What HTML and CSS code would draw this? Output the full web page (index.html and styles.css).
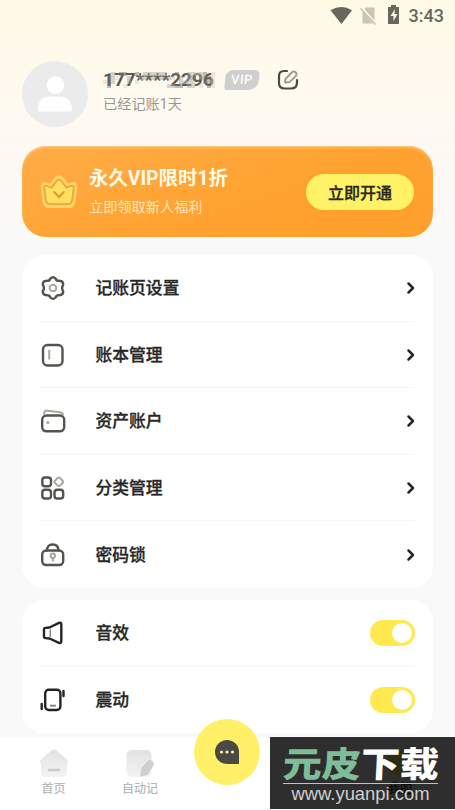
FILE: index.html
```html
<!DOCTYPE html>
<html lang="zh-CN">
<head>
<meta charset="utf-8">
<title>我的</title>
<link rel="stylesheet" href="styles.css">
</head>
<body>
<div class="screen">
  <header class="status">
    <svg class="status-icons" width="72" height="22" viewBox="0 0 72 22">
      <path d="M.5 4.8Q11.500-2 22 4.800L11.500 18.500Z" fill="#68665d" transform="translate(0 .500)"/>
      <path d="M36 2.500h8.500v16h-12v-12z" fill="#c8c5b5"/>
      <path d="M31 2.500l15 17" stroke="#fff9e6" stroke-width="3"/>
      <path d="M30.500 3.500l15 16" stroke="#c0bdae" stroke-width="1.400"/>
      <path d="M58 2h3V0h5v2h3v17H58z" fill="#68665d"/>
      <path d="M65 4l-4.500 7h3v5l4-7h-3z" fill="#fff9e6"/>
    </svg>
    <span class="clock">3:43</span>
  </header>

  <section class="profile">
    <svg class="avatar" width="66" height="66" viewBox="0 0 66 66"><circle cx="33" cy="33" r="33" fill="#ebebeb"/><circle cx="33.500" cy="24" r="8.800" fill="#fff"/><path d="M16 49Q16 35.500 29 35.500h8Q50 35.500 50 49q0 1.500-1.500 1.500h-31Q16 50.500 16 49z" fill="#fff"/></svg>
    <div class="who">
      <div class="name-line">
        <span class="phone"><span class="digits">177****2296</span>
          <svg class="mosaic" viewBox="0 0 28 4" preserveAspectRatio="none" shape-rendering="crispEdges">
            <path fill="#d5d1c4" d="M0 2h1v1H0zM3 1h1v1H3zM5 3h1v1H5zM8 2h1v1H8zM17 1h1v1h-1zM20 2h1v1h-1zM23 0h1v1h-1zM24 3h1v1h-1zM27 0h1v4h-1z"/>
            <path fill="#a5a299" d="M2 0h1v3H2zM6 1h1v2H6zM10 0h6v1h-6zM9 1h8v1H9zM16 3h2v1h-2zM19 1h1v2h-1zM21 0h2v4h-2zM24 0h1v2h-1z"/>
            <path fill="#77756d" d="M1 1h1v3H1zM4 0h2v1H4zM8 0h1v1H8zM11 1h1v1h-1zM13 1h1v1h-1zM15 1h1v1h-1zM18 0h1v1h-1zM18 3h2v1h-2zM22 1h1v1h-1zM25 0h1v3h-1zM26 1h1v3h-1z"/>
          </svg>
        </span>
        <span class="vip">VIP</span>
        <svg class="edit" width="22" height="22" viewBox="0 0 22 22" fill="none" stroke-linecap="round"><path d="M10 2H7Q2 2 2 7v7q0 5.500 5.500 5.500H14q6 0 6-6V11" stroke="#4c4a43" stroke-width="2.200"/><path d="M8 13.500l.5-3.500 6.500-6.700q1.800-1.600 3.600 0t.1 3.800l-6.200 6z" stroke="#a19e91" stroke-width="2" stroke-linejoin="round"/></svg>
      </div>
      <p class="days">已经记账1天</p>
    </div>
  </section>

  <section class="banner">
    <svg class="crown" width="40" height="36" viewBox="0 0 38 34" stroke-linejoin="round" stroke-linecap="round"><path d="M3.500 13q-.8-5 3.500-3.500l4.500 1.500 4-6Q19 .5 22.500 5l4 6L31 9.500q4.300-1.500 3.500 3.500L33 25.500q-.5 5-5 5H10q-4.500 0-5-5z" fill="#ffe268" stroke="#ffd365" stroke-width="3.500"/><path d="M5 13.500q-.5-3.300 2.700-2.200l4.500 1.500 4.300-6Q19 3.500 21.500 6.800l4.300 6 4.500-1.500q3.200-1.100 2.700 2.200L31.500 24.500q-.5 4-4 4h-17q-3.500 0-4-4z" fill="#ffe061" stroke="#eda63b" stroke-width="1.700"/><path d="M14.500 17l4.500 5 4.500-5" fill="none" stroke="#e59633" stroke-width="2"/></svg>
    <div class="offer"><h1>永久VIP限时1折</h1><p>立即领取新人福利</p></div>
    <button class="open">立即开通</button>
  </section>

  <section class="card">
    <div class="row">
      <svg class="icon" viewBox="0 0 26 26"><path d="M10.400 3.500Q13 1 15.600 3.500Q16.500 6.200 19.500 5.800Q23.300 6 23.200 9.800Q21 13 23.200 16.200Q23.300 20 19.500 20.200Q16.500 19.800 15.600 22.500Q13 25 10.400 22.500Q9.500 19.800 6.500 20.200Q2.700 20 2.800 16.200Q5 13 2.800 9.800Q2.700 6 6.500 5.800Q9.500 6.200 10.400 3.500z" class="line"/><circle cx="13" cy="13" r="3.300" class="soft"/></svg>
      <span class="label">记账页设置</span><svg class="arrow" viewBox="0 0 10 14"><path d="M2.500 2.500L7 7l-4.500 4.500"/></svg>
    </div>
    <div class="row">
      <svg class="icon" viewBox="0 0 26 26"><rect x="3" y="3" width="19.500" height="20.500" rx="4.500" class="line"/><path d="M9.200 8v9.500" class="soft"/></svg>
      <span class="label">账本管理</span><svg class="arrow" viewBox="0 0 10 14"><path d="M2.500 2.500L7 7l-4.500 4.500"/></svg>
    </div>
    <div class="row">
      <svg class="icon" viewBox="0 0 26 26"><path d="M4 6.500q0-4.500 4-3.800l12 1.600q3 .5 3 3" class="soft"/><rect x="2.200" y="7.500" width="22" height="15.800" rx="4.200" class="line"/><circle cx="7.800" cy="14.500" r="1.600" fill="#aaa79f"/></svg>
      <span class="label">资产账户</span><svg class="arrow" viewBox="0 0 10 14"><path d="M2.500 2.500L7 7l-4.500 4.500"/></svg>
    </div>
    <div class="row">
      <svg class="icon" viewBox="0 0 26 26"><rect x="2.300" y="2.500" width="8.700" height="8.800" rx="2.700" class="line"/><rect x="2.300" y="14.700" width="8.700" height="8.800" rx="2.700" class="line"/><rect x="14.500" y="14.700" width="8.700" height="8.800" rx="2.700" class="line"/><rect x="15.300" y="3.300" width="7" height="7" rx="2" class="soft" transform="rotate(45 18.800 6.800)"/></svg>
      <span class="label">分类管理</span><svg class="arrow" viewBox="0 0 10 14"><path d="M2.500 2.500L7 7l-4.500 4.500"/></svg>
    </div>
    <div class="row">
      <svg class="icon" viewBox="0 0 26 26"><path d="M7 8.500Q7 2.500 12.700 2.500t5.800 6" class="line"/><rect x="2.200" y="8.500" width="21" height="14.500" rx="4" class="line"/><circle cx="12.800" cy="13.800" r="2.200" class="soft"/><path d="M12.800 16v3.500" class="soft"/></svg>
      <span class="label">密码锁</span><svg class="arrow" viewBox="0 0 10 14"><path d="M2.500 2.500L7 7l-4.500 4.500"/></svg>
    </div>
  </section>

  <section class="card">
    <div class="row">
      <svg class="icon" viewBox="0 0 26 26"><path d="M4 9.500q0-1.500 1.500-1.600l4-.4L19 2.800q2.300-.8 2.300 1.500v17q0 2.300-2.300 1.500l-9.500-4.300-4-.4Q4 18 4 16.500z" class="line dark"/><path d="M10.300 9.500v7.500" stroke="#888" stroke-width="1.600"/></svg>
      <span class="label">音效</span><span class="switch"></span>
    </div>
    <div class="row">
      <svg class="icon" viewBox="0 0 26 26"><rect x="5.200" y="2.800" width="15.200" height="20.200" rx="3.500" class="line dark"/><path d="M10 18.700h6" stroke="#888" stroke-width="2"/><path d="M23.500 4v5M1.700 17v5" class="line dark"/></svg>
      <span class="label">震动</span><span class="switch"></span>
    </div>
  </section>

  <nav class="tabs">
    <div class="tab">
      <svg width="32" height="30" viewBox="0 0 32 30"><defs><linearGradient id="fade" x2="0" y2="1"><stop stop-color="#e2e2e2"/><stop offset="1" stop-color="#f3f3f3"/></linearGradient></defs><path d="M14 2q2-1.500 4 0l11.500 10q1.800 2-.5 2.700V24q0 5-5 5H8q-5 0-5-5v-9.300q-2.300-.7-.5-2.700z" fill="url(#fade)"/><path d="M11 22h10" stroke="#c9c9c9" stroke-width="2.400" stroke-linecap="round"/></svg>
      <span>首页</span>
    </div>
    <div class="tab">
      <svg width="32" height="30" viewBox="0 0 32 30"><rect x="2.500" y="2" width="25" height="27" rx="5" fill="url(#fade)"/><path d="M17.500 20l6-7q2-2 4.500-.3t1.500 4.800L23.500 27l-7 1.700q-.8-4.200 1-8.700z" fill="#cfcfcf"/></svg>
      <span>自动记</span>
    </div>
    <div class="chat"><svg width="26" height="26" viewBox="0 0 26 26"><path d="M13 1a12 12 0 0 1 12 12v12H13A12 12 0 0 1 13 1z" fill="#4a4944"/><g fill="#fff3a0"><circle cx="7.500" cy="13" r="1.600"/><circle cx="13" cy="13" r="1.600"/><circle cx="18.500" cy="13" r="1.600"/></g></svg></div>
    <div class="tab active">
      <svg width="32" height="30" viewBox="0 0 32 30"><circle cx="16" cy="15" r="13" fill="#ffe94f"/></svg>
      <span>我的</span>
    </div>
  </nav>
  <aside class="mark">
    <div class="mark-name"><span class="green">元皮</span>下载</div>
    <div class="mark-line"></div>
    <div class="mark-url">www.yuanpi.com</div>
  </aside>
</div>
</body>
</html>
```
FILE: styles.css
```css
* { box-sizing: border-box; }
body, h1, p { margin: 0; }
body { font-family: Roboto, "Noto Sans CJK SC", sans-serif; color: #272727; }
.screen {
  position: relative; width: 455px; height: 810px; overflow: hidden;
  padding: 0 22px;
  background: linear-gradient(#fff9e6 0, #fffaf0 100px, #f9f9f9 250px);
}
.status { display: flex; justify-content: flex-end; align-items: center; height: 32px; margin-right: -11px; gap: 7px; }
.status-icons { flex: none; }
.clock { font-size: 18px; font-weight: 500; color: #68665d; line-height: 22px; }
.profile { display: flex; gap: 15px; height: 66px; margin-top: 29px; }
.avatar { flex: none; }
.who { padding-top: 7px; }
.name-line { display: flex; align-items: center; height: 24px; }
.phone { display: grid; align-items: center; width: 122px; }
.digits { grid-area: 1 / 1; font-size: 19px; line-height: 24px; font-weight: 700; color: #5b5953; }
.mosaic { grid-area: 1 / 1; width: 112px; height: 16px; opacity: .45; z-index: 1; }
.vip { width: 34px; height: 20px; border-radius: 8px 4px 10px 3px; background: #d0cfcf; color: #fffdf7; font-size: 13px; line-height: 20px; font-weight: 500; text-align: center; transform: skewX(-4deg); letter-spacing: .5px; }
.edit { margin-left: 18px; }
.days { font-size: 14.2px; line-height: 22px; margin-top: 1px; color: #9a978e; }
.banner {
  display: flex; align-items: center; height: 91px; margin-top: 19px; padding: 0 19px 0 17px;
  border-radius: 24px; background: linear-gradient(160deg, #ffad48, #ffa231 55%, #ff9f2c);
  box-shadow: inset 0 2px 3px -1px #ffd199;
}
.offer { flex: 1; margin-left: 10px; }
.offer h1 { font-size: 19.4px; line-height: 28px; font-weight: 700; color: #fffbe7; }
.offer p { font-size: 14.2px; line-height: 22px; margin-top: 3px; color: #ffe6b8; }
.open { width: 108px; height: 36px; padding: 0; border: 0; border-radius: 18px; background: #fff268; color: #292719; font: 500 16px/34px "Noto Sans CJK SC", sans-serif; -webkit-text-stroke: .3px #292719; }
.card { margin-top: 18px; padding: 0 18px; border-radius: 22px; background: #fff; }
.card + .card { margin-top: 12px; }
.row { display: flex; align-items: center; height: 66.6px; box-shadow: inset 0 -1px #f6f6f6; }
.row:last-child { box-shadow: none; }
.icon { width: 26px; height: 26px; flex: none; fill: none; }
.line { fill: none; stroke: #55534e; stroke-width: 2.4; stroke-linecap: round; stroke-linejoin: round; }
.line.dark { stroke: #242424; }
.soft { fill: none; stroke: #aaa79f; stroke-width: 2; }
.label { flex: 1; margin-left: 29.5px; font-size: 16.8px; line-height: 24px; font-weight: 500; -webkit-text-stroke: .3px #272727; }
.arrow { width: 10px; height: 14px; margin-right: -1px; fill: none; stroke: #272727; stroke-width: 2.5; stroke-linecap: round; stroke-linejoin: round; }
.switch { display: flex; justify-content: flex-end; align-items: center; width: 45px; height: 26px; padding-right: 3px; border-radius: 13px; background: #ffe94f; }
.switch::after { content: ""; width: 20px; height: 20px; border-radius: 50%; background: #fff; }
.tabs { position: absolute; left: 0; right: 0; bottom: 0; height: 73px; display: grid; grid-template-columns: 107px 66px 107px 175px; background: #fff; }
.tab { display: flex; flex-direction: column; align-items: center; padding-top: 11px; font-size: 12px; line-height: 17px; font-weight: 500; color: #b8b8b8; gap: 3px; white-space: nowrap; }
.tab.active { color: #000; padding-left: 65px; }
.chat { display: flex; align-items: center; justify-content: center; width: 66px; height: 66px; margin: -18px 0 0 21px; border-radius: 50%; background: #fff068; }
.active { width: 175px; }
.mark { position: absolute; left: 270px; top: 737px; width: 185px; height: 72px; background: rgba(4, 4, 4, .83); color: #fff; padding: 7px 17px 0 13px; }
.mark-name { height: 39px; font: 900 39px/39px "Noto Sans CJK SC", sans-serif; white-space: nowrap; transform: translateY(-1px) skewX(-3deg) scaleY(.9); }
.green { color: #7fbd98; }
.mark-line { height: 1px; background: #b5c9bd; }
.mark-url { font: 18.4px/20px "Liberation Sans", sans-serif; color: #cecece; text-align: center; }
```
